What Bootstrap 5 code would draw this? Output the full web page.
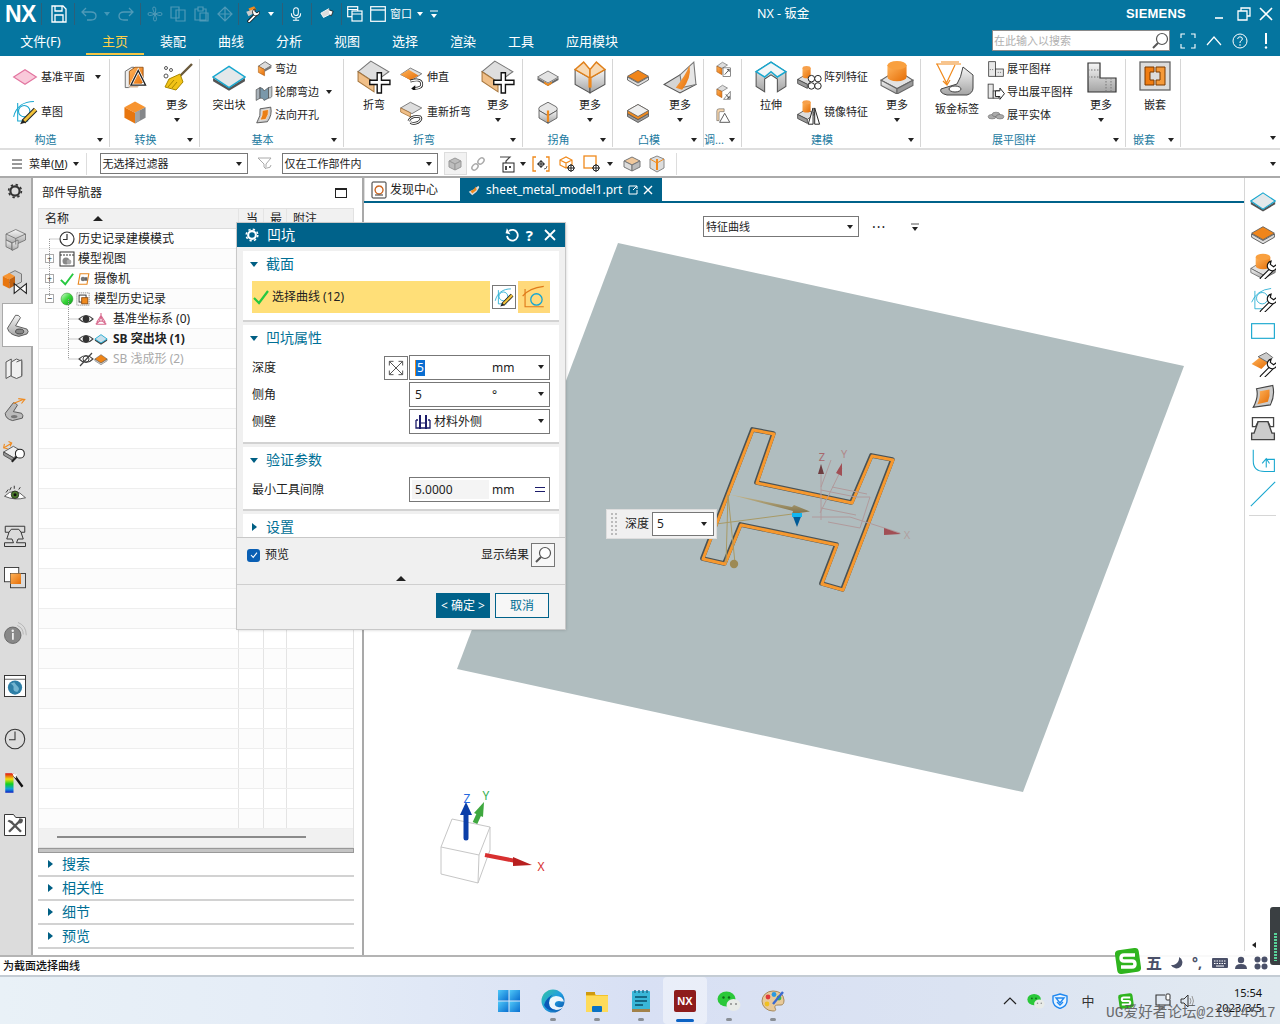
<!DOCTYPE html>
<html lang="zh-CN">
<head>
<meta charset="UTF-8">
<title>NX - 钣金</title>
<link rel="stylesheet" href="https://cdn.jsdelivr.net/npm/bootstrap@5.3.0/dist/css/bootstrap.min.css">
<style>
html, body { margin:0; width:1280px; height:1024px; overflow:hidden; background:#fff; }
body { font-family:"Noto Sans","Noto Sans CJK SC",sans-serif; font-size:11px; line-height:16px; color:#222; }
svg { display:block; flex:none; }
.nx-app { width:1280px; height:1024px; position:relative; }
.ml1{margin-left:1px}.ml2{margin-left:2px}.ml3{margin-left:3px}.ml4{margin-left:4px}.ml5{margin-left:5px}.ml6{margin-left:6px}.ml7{margin-left:7px}.ml8{margin-left:8px}.ml9{margin-left:9px}.ml10{margin-left:10px}.ml12{margin-left:12px}.ml13{margin-left:13px}.ml22{margin-left:22px}.ml20{margin-left:20px}
.mr6{margin-right:6px}.mr7{margin-right:7px}
.i10{width:10px;height:10px}.i14{width:14px;height:14px}.i16{width:16px;height:16px}.i18{width:18px;height:18px}.i20{width:20px;height:20px}.i24{width:24px;height:24px}.i26{width:26px;height:26px}.i28{width:28px;height:28px}.i32{width:32px;height:32px}.i34{width:34px;height:34px}.i44{width:44px;height:38px}
.tri-d { width:0;height:0;border-left:3.5px solid transparent;border-right:3.5px solid transparent;border-top:4px solid #222;flex:none; }
.tri-w { border-top-color:#fff; }
.tri-r { width:0;height:0;border-top:4px solid transparent;border-bottom:4px solid transparent;border-left:5px solid #005f84;flex:none; }
.tri-t { width:0;height:0;border-left:5px solid transparent;border-right:5px solid transparent;border-bottom:5px solid #222;flex:none; }

/* title area */
.nx-top { height:56px; background:#05759f; color:#fff; flex:none; }
.top-row { height:28px; }
.nx-logo { font:bold 23px/28px "Liberation Sans",sans-serif; width:31px; margin-left:5px; letter-spacing:-.5px; }
.q-sep { width:1px; height:22px; background:#2d5f78; flex:none; }
.q-title { position:relative; font-size:12.5px; width:60px; white-space:nowrap; }
.q-left { width:757px; }
.q-brand { font:bold 13px/28px "Liberation Sans",sans-serif; letter-spacing:.2px; margin-left:309px; width:66px; white-space:nowrap; }
.m-tab { height:26px; width:58px; text-align:center; font-size:13px; line-height:24px; flex:none; }
.m-file { width:81px; margin-right:5px; }
.m-wide { width:84px; }
.m-active { color:#ffd04a; border-bottom:2px solid #f6c544; }
.nx-search { width:178px; height:21px; background:#fff; border:1px solid #8a8a8a; margin-left:358px; color:#b0b0b0; padding-left:1px; line-height:19px; align-self:flex-start; margin-top:2px; }
.top-ic { margin-top:-2px; }

/* ribbon */
.nx-ribbon { height:94px; background:#fff; border-bottom:2px solid #dedede; flex:none; position:relative; }
.rg { height:88px; margin-top:3px; border-right:1px solid #d6d6d6; flex:none; }
.rg-body { height:74px; }
.rg-foot { height:14px; color:#1b7aa0; line-height:14px; font-size:11px; }
.rg-name { flex-grow:1; text-align:center; white-space:nowrap; }
.rg-car { width:18px; display:flex; justify-content:center; align-items:center; }
.w110{width:110px}.w90{width:90px}.w144{width:144px}.w179{width:179px}.w91{width:91px}.w38{width:38px}.w205{width:205px}.w55{width:55px}
.stk2 > div { height:35px; display:flex; align-items:center; white-space:nowrap; }
.stk3 { margin-top:-2px; }
.stk3 > div { height:23px; display:flex; align-items:center; white-space:nowrap; }
.lg { display:flex; flex-direction:column; align-items:center; text-align:center; white-space:nowrap; }
.lg svg { margin-top:1px; }
.lg .i32 { height:34px; }
.lg-lab { margin-top:3px; }
.lg .tri-d { margin-top:5px; }
.lg-44 { width:48px; }
.lg-34 { width:34px; }

/* toolbar */
.nx-bar { height:28px; border-bottom:2px solid #aaa; background:#fff; flex:none; padding-top:1px; }
.nx-sel { height:21px; background:#fff; border:1px solid #777; display:flex; align-items:center; justify-content:space-between; padding:0 5px 0 2px; flex:none; }
.w148{width:148px}.w156{width:156px}
.bar-sep { width:1px;height:22px;background:#ddd;flex:none; }
.bar-box { width:23px;height:23px;background:#f2f2f2;border:1px solid #ddd;display:flex;align-items:center;justify-content:center;flex:none; }

/* main */
.nx-main { height:777px; flex:none; position:relative; }
.nv-strip { width:33px; background:#dcdcdc; border-right:2px solid #a9a9a9; flex:none; }
.st-i { height:42px; display:flex; align-items:center; justify-content:center; flex:none; padding-right:2px; }
.st-top { height:26px; margin-bottom:15px; }
.st-on { height:44px; background:#fff; margin:0 -2px 0 2px; border:1px solid #aaa; border-right:none; position:relative; padding:0; }
.mt11x{margin-top:11px}.mt13x{margin-top:13px}.mt2x{margin-top:2px}

.nv-panel { width:331px; border-right:2px solid #a9a9a9; flex:none; background:#fff; position:relative; }
.nv-head { height:30px; padding:0 15px 0 9px; font-size:12px; }
.nv-win { width:12px;height:10px;border:1px solid #222;border-top-width:2px; }
.nv-table { width:316px; margin-left:5px; border:1px solid #e2e2e2; border-right-color:#e2e2e2; position:relative; height:640px; overflow:hidden; }
.nv-hd, .nv-row { display:flex; height:20px; }
.nv-hd { background:#f1f1f1; border-bottom:1px solid #ddd; line-height:20px; font-size:12px; }
.nv-row { border-bottom:1px solid #eee; }
.nv-row:nth-child(even) { background:#fcfcfc; }
.c-name { width:200px; border-right:1px solid #e4e4e4; display:flex; align-items:center; position:relative; flex:none; overflow:hidden; white-space:nowrap; }
.c-a { width:25px; border-right:1px solid #e4e4e4; flex:none; padding-left:7px; }
.c-b { width:23px; border-right:1px solid #e4e4e4; flex:none; padding-left:6px; }
.c-c { flex-grow:1; padding-left:6px; }
.nv-text { font-size:12px; color:#222; }
.nv-bold { font-weight:700; }
.nv-gray { color:#aaa; }
.pm-box { width:9px;height:9px;border:1px solid #aaa;background:#fff;position:absolute;left:6px;top:5px;color:#222;display:flex;align-items:center;justify-content:center;font-size:9px;line-height:7px; }
.tree-a { padding-left:20px; }
.tree-b { padding-left:21px; }
.tree-c { padding-left:39px; }
.nv-tree-svg { position:absolute; left:0; top:20px; pointer-events:none; }
.nv-hscroll { position:absolute; left:0; right:0; bottom:0; height:18px; background:#f1f1f1; }
.nv-thumb { position:absolute; left:18px; top:7px; width:249px; height:2px; background:#8a8a8a; }
.nv-grip { width:316px; height:5px; margin-left:5px; background:#c4c4c4; border:1px solid #999; }
.nv-fold { width:316px; margin-left:5px; height:24px; border-bottom:2px solid #d2d2d2; color:#006f95; font-size:14px; padding-left:10px; line-height:24px; }
.nv-fold span { margin-left:9px; }

.vp { flex-grow:1; position:relative; background:#fff; }
.vp-tabs { height:25px; width:880px; position:relative; z-index:2; border-bottom:2px solid #00628a; }
.vp-tab { height:23px; display:flex; align-items:center; font-size:12px; }
.vp-tab1 { width:96px; padding-left:5px; border-left:1px solid #ddd; }
.vp-tab2 { width:202px; background:#00628a; color:#fff; padding-left:7px; }
.vp-canvas { position:absolute; left:0; top:0; }
.vp-side { position:absolute; right:0; top:0; bottom:0; width:36px; border-left:1px solid #d6d6d6; background:#fff; padding-top:10px; }
.vp-side > svg { margin:0 0 6.5px 5px; }
.vp-rule { width:27px; height:1px; background:#d6d6d6; margin:2px 0 0 4px; }
.vp-combo { position:absolute; left:339px; top:38px; }
.vp-more { position:absolute; left:506px; top:38px; width:50px; height:21px; display:flex; align-items:center; font-size:14px; letter-spacing:1px; }
.vp-pop { position:absolute; left:242px; top:331px; width:111px; height:30px; background:#f0f0f0; border:1px solid #ddd; display:flex; align-items:center; }
.pop-grip { width:7px; height:24px; margin-left:3px; background-image:radial-gradient(#bbb 1.2px, transparent 1.4px); background-size:4px 4px; flex:none; }
.pop-sel { width:62px; height:24px; background:#fff; border:1px solid #777; display:flex; align-items:center; justify-content:space-between; padding:0 6px 0 4px; font-size:12px; margin-left:3px; }
.pop-lab { margin-left:8px; font-size:12px; }

/* dialog */
.dg { position:absolute; left:237px; top:45px; width:328px; height:406px; background:#f0f0f0; box-shadow:0 0 0 1px #c8c8c8, 1px 1px 3px rgba(0,0,0,.2); z-index:5; }
.dg-head { height:24px; background:#00628a; color:#fff; font-size:14px; padding:0 8px; }
.dg-q { font-size:15px; }
.dg-body { padding:4px 6px 0; }
.dg-sec { background:#fff; border-bottom:2px solid #d2d2d2; padding:0 9px; margin-bottom:3px; }
.dg-title { height:26px; color:#006f95; font-size:14px; display:flex; align-items:center; }
.dg-title .tri-dd { width:0;height:0;border-left:4.5px solid transparent;border-right:4.5px solid transparent;border-top:5px solid #005f84;margin:0 8px 0 -2px; }
.dg-title .tri-r { margin:0 9px 0 0; }
.dg-s1 { height:71px; }
.dg-s2 { height:119px; }
.dg-s3 { height:64px; }
.dg-s4 { height:23px; border-bottom:none; margin-bottom:0; }
.dg-pick { height:32px; width:238px; background:#ffdf78; display:flex; align-items:center; padding-left:1px; font-size:12px; margin-top:4px; }
.dg-icobtn { width:24px;height:24px;background:#fff;border:1px solid #777;display:flex;align-items:center;justify-content:center;flex:none; }
.dg-yel { width:32px;height:32px;background:#ffd97a;display:flex;align-items:center;justify-content:center;flex:none; }
.dg-row { height:25px; margin-bottom:2px; display:flex; align-items:center; font-size:12px; }
.dg-r1 { margin-top:4px; }
.dg-lab { width:132px; flex:none; }
.dg-field { width:141px; height:25px; border:1px solid #777; background:#fff; display:flex; align-items:center; position:relative; padding-left:5px; font-size:12px; flex:none; }
.dg-indent { margin-left:25px; }
.dg-unit { position:absolute; left:82px; font-size:12px; }
.dg-field .tri-d { position:absolute; right:5px; top:9px; }
.dg-mark { background:#0a6ed1; color:#fff; border-left:1px solid #f08a1d; padding:0 1px; line-height:16px; }
.dg-grey { position:absolute; left:2px; top:2px; bottom:2px; width:77px; background:#f4f4f4; padding-left:3px; line-height:19px; }
.dg-eq { position:absolute; right:4px; top:9px; width:10px; height:5px; border-top:1px solid #1c1c6a; border-bottom:1px solid #1c1c6a; }
.dg-foot { border-top:1px solid #c8c8c8; margin:0; height:91px; font-size:12px; padding:5px 10px 0 9px; position:relative; }
.dg-search { width:24px;height:24px;border:1px solid #777;background:#f7f7f7;display:flex;align-items:center;justify-content:center;margin-left:2px; }
.dg-check { width:13px;height:13px;margin:0 5px 0 1px;border-radius:3px;background:#0a5fb4;border:none;flex:none;display:flex;align-items:center;justify-content:center; }
.dg-up { position:absolute; left:159px; top:38px; }
.dg-line { position:absolute; left:0; right:0; top:46px; border-top:1px solid #cfcfcf; }
.btn.dg-ok, .btn.dg-no { position:absolute; top:55px; height:25px; font-size:12px; line-height:16px; border-radius:0; padding:0; }
.btn.dg-ok { left:199px; width:54px; background:#00628a; color:#fff; border:1px solid #00628a; }
.btn.dg-no { left:258px; width:54px; background:#f7f7f7; color:#006f95; border:1px solid #00628a; }

/* bottom */
.nx-status { height:22px; border-top:2px solid #b4b4b4; border-bottom:2px solid #c4ccd4; background:#fff; font-weight:500; padding-left:3px; line-height:18px; flex:none; color:#111; }
.nx-task { height:47px; background:linear-gradient(90deg,#e9f1f7 0%,#e4ecf7 25%,#d8e0f4 50%,#dbe3f2 75%,#e2eaf1 100%); position:relative; flex:none; }
.tb-i { width:44px; height:47px; display:flex; align-items:center; justify-content:center; position:relative; flex:none; }
.tb-first { margin-left:487px; }
.tb-on { background:rgba(255,255,255,.45); border-radius:4px; }
.tb-dot { position:absolute; bottom:3px; left:19px; width:6px; height:3px; border-radius:2px; background:#8a8f96; }
.tb-dash { position:absolute; bottom:2px; left:13px; width:18px; height:3px; border-radius:2px; background:#0b62c4; }
.tray { margin-left:208px; }
.tb-zh { font-size:13px; width:14px; text-align:center; color:#333; margin-left:13px; }
.tb-time { position:absolute; left:1202px; top:8px; width:60px; text-align:right; font-size:11px; line-height:15px; color:#111; }
.tb-mark { position:absolute; left:1106px; top:27px; font-family:"Liberation Mono","Noto Sans CJK SC",monospace; font-size:14.5px; line-height:18px; color:#555; opacity:.85; white-space:nowrap; letter-spacing:.1px; }
.ime { position:absolute; left:1120px; top:951px; width:157px; height:23px; background:rgba(255,255,255,.92); display:flex; align-items:center; color:#4a5068; z-index:6; padding-left:26px; }
.ime-logo { position:absolute; left:1113px; top:946px; z-index:7; }
.ime-ch { font-size:16px; font-weight:700; }
.ime-p { font-size:14px; font-weight:700; width:12px; }
.meter { position:absolute; left:1270px; top:907px; width:10px; height:58px; background:#3a3f42; border-radius:3px 0 0 3px; z-index:6; }
.meter-fill { position:absolute; left:4px; right:3px; top:26px; bottom:4px; background:repeating-linear-gradient(180deg,#58d39a 0 2px,transparent 2px 3px); }
.vp-back { position:absolute; left:1252px; top:942px; width:0;height:0;border-top:3.5px solid transparent;border-bottom:3.5px solid transparent;border-right:4px solid #222; z-index:6; }
</style>
</head>
<body>
<svg width="0" height="0" class="position-absolute">
<defs>
  <linearGradient id="g-or" x1="0" y1="0" x2="1" y2="1"><stop offset="0" stop-color="#ffb45c"/><stop offset="1" stop-color="#e56d05"/></linearGradient>
  <linearGradient id="g-gr" x1="0" y1="0" x2="0" y2="1"><stop offset="0" stop-color="#f6f6f6"/><stop offset="1" stop-color="#a4a4a4"/></linearGradient>
  <linearGradient id="g-win" x1="0" y1="0" x2="1" y2="1"><stop offset="0" stop-color="#4fc8f8"/><stop offset="1" stop-color="#0a6fd0"/></linearGradient>
  <linearGradient id="g-ball" x1="0" y1="0" x2="1" y2="1"><stop offset="0" stop-color="#d8ffd8"/><stop offset=".5" stop-color="#38d838"/><stop offset="1" stop-color="#0e9a20"/></linearGradient>
  <linearGradient id="g-arrow" x1="0" y1="0" x2="0" y2="1"><stop offset="0" stop-color="#c9bb8e"/><stop offset="1" stop-color="#7d6f48"/></linearGradient>
  <linearGradient id="g-rain" x1="0" y1="0" x2="0" y2="1"><stop offset="0" stop-color="#e01010"/><stop offset=".3" stop-color="#f0e010"/><stop offset=".55" stop-color="#10d020"/><stop offset=".8" stop-color="#10a0e0"/><stop offset="1" stop-color="#1020c0"/></linearGradient>
  <linearGradient id="g-edge" x1="0" y1="0" x2="1" y2="1"><stop offset="0" stop-color="#36c4a0"/><stop offset=".5" stop-color="#1f9fe0"/><stop offset="1" stop-color="#0b4ea8"/></linearGradient>
  <g id="wr"><path d="M12 30 L24 18" stroke="#111" stroke-width="6" stroke-linecap="round"/><path d="M12 30 L24 18" stroke="#fff" stroke-width="3.4" stroke-linecap="round"/><path d="M30 12 a6 6 0 1 1 -7 -4 l-1 4 4 3 z" fill="#fff" stroke="#111" stroke-width="1.4"/></g>
  <g id="pl"><path d="M19 12h4v7h8v4h-8v8h-4v-8h-7v-4h7z" fill="#fff" stroke="#111" stroke-width="1.3"/></g>
</defs>
<symbol id="i-plane" viewBox="0 0 32 32"><polygon points="2,16 16,7 30,16 16,25" fill="#f9c9da" stroke="#e2749f" stroke-width="1.4"/></symbol>
<symbol id="i-sketch" viewBox="0 0 32 32"><path d="M2 22C5 9 15 3 27 3" fill="none" stroke="#18a7cf" stroke-width="1.3"/><path d="M7 5V27H20" fill="none" stroke="#18a7cf" stroke-width="1.3"/><circle cx="15" cy="15" r="7" fill="none" stroke="#18a7cf" stroke-width="1.3"/><path d="M29 13L14 28" stroke="#222" stroke-width="6"/><path d="M29 13L14 28" stroke="#f2c23a" stroke-width="3.6"/><polygon points="13,25 17,29 10,31" fill="#222"/></symbol>
<symbol id="i-conv" viewBox="0 0 32 32"><path d="M4 9l8-5h3v20l-7 5H4z" fill="#eee" stroke="#555"/><path d="M9 9l7-5h10v18l-7 6H9z" fill="url(#g-or)" stroke="#8a4a10"/><path d="M20 8L29 26H11Z" fill="none" stroke="#fff" stroke-width="3.4"/><path d="M20 8L29 26H11Z" fill="none" stroke="#222" stroke-width="1.6"/></symbol>
<symbol id="i-cube" viewBox="0 0 32 32"><polygon points="16,3 29,10 16,17 3,10" fill="#f79430"/><polygon points="3,10 16,17 16,30 3,23" fill="#e8760f"/><polygon points="16,17 29,10 29,23 16,30" fill="#85878a"/><polygon points="16,17 22,14 22,26 16,30" fill="#a2a4a6"/></symbol>
<symbol id="i-broom" viewBox="0 0 32 32"><path d="M31 3L17 17" stroke="#6b5a3c" stroke-width="2.4"/><path d="M19 13L8 18 4 26l11 3 7-8z" fill="#f2c318" stroke="#a88700"/><path d="M7 26l6-7M11 27l5-6" stroke="#a88700"/><g fill="none" stroke="#555"><circle cx="5" cy="7" r="1.5"/><circle cx="10" cy="9" r="1.5"/><circle cx="5" cy="15" r="2"/></g></symbol>
<symbol id="i-plate" viewBox="0 0 32 32"><polygon points="1,17 16,26 31,17 31,20 16,29 1,20" fill="#555"/><polygon points="16,6 31,16 16,26 1,16" fill="#e4e8ea" stroke="#18a7cf" stroke-width="1.4"/></symbol>
<symbol id="i-flange" viewBox="0 0 32 32"><polygon points="6,11 18,3 29,10 17,17" fill="#dcdcdc" stroke="#555" stroke-width="1.4"/><polygon points="6,11 17,17 17,28 6,22" fill="url(#g-or)" stroke="#a85a10"/><polygon points="17,17 29,10 29,14 17,21" fill="#777"/></symbol>
<symbol id="i-contour" viewBox="0 0 32 32"><path d="M2 12L9 8V27L2 31Z" fill="#a9b2b9" stroke="#333"/><path d="M9 8q6 1 7 6L24 8V27L16 31q-1-5-7-4Z" fill="#7a98aa" stroke="#333"/><path d="M24 8q5 0 6-2V24q-2 3-6 3Z" fill="#c4cbcf" stroke="#333"/></symbol>
<symbol id="i-cutout" viewBox="0 0 32 32"><path d="M9 5L28 2Q31 16 22 28L3 30Q11 17 9 5Z" fill="#ccc" stroke="#333" stroke-width="1.3"/><path d="M13 8L24 6Q25 15 19 24L9 25Q14 16 13 8Z" fill="#ea7f16" stroke="#fff"/></symbol>
<symbol id="i-bend" viewBox="0 0 32 32"><polygon points="1,11 13,1 30,11 16,21" fill="#dedede" stroke="#777"/><polygon points="1,11 16,21 16,30 1,20" fill="#f0bf88" stroke="#a87840"/><use href="#pl"/></symbol>
<symbol id="i-unbend" viewBox="0 0 32 32"><polygon points="2,13 14,5 28,12 16,20" fill="#dedede" stroke="#666"/><polygon points="2,13 12,7 24,14 14,20" fill="url(#g-or)"/><path d="M14 21q14-4 14 4 0 5-9 5" fill="none" stroke="#111" stroke-width="3.4"/><path d="M14 21q14-4 14 4 0 5-9 5" fill="none" stroke="#fff" stroke-width="1.6"/><polygon points="20,26 15,30 20,34" fill="#111"/></symbol>
<symbol id="i-rebend" viewBox="0 0 32 32"><polygon points="2,11 14,4 28,11 16,18" fill="#dedede" stroke="#666"/><polygon points="2,11 14,17 14,22 2,16" fill="#f0bf88" stroke="#a87840"/><path d="M12 27q3-7 14-5 3 3-3 7-5 2-9 0" fill="none" stroke="#111" stroke-width="3.2"/><path d="M12 27q3-7 14-5 3 3-3 7-5 2-9 0" fill="none" stroke="#fff" stroke-width="1.4"/></symbol>
<symbol id="i-cor1" viewBox="0 0 32 32"><polygon points="2,17 16,25 30,17 30,20 16,28 2,20" fill="#666"/><polygon points="16,8 30,16 16,24 2,16" fill="#e3e3e3" stroke="#555"/><polygon points="11,22 16,25 21,22 21,25 16,28 11,25" fill="#f08a1d"/></symbol>
<symbol id="i-cor2" viewBox="0 0 32 32"><polygon points="2,9 16,17 16,31 2,23" fill="url(#g-gr)" stroke="#555"/><polygon points="16,17 30,9 30,23 16,31" fill="url(#g-gr)" stroke="#555"/><polygon points="2,9 10,2 16,9 16,17" fill="#f7d9b4" stroke="#e0801a" stroke-width="1.4"/><polygon points="30,9 22,2 16,9 16,17" fill="#f7d9b4" stroke="#e0801a" stroke-width="1.4"/><path d="M16 17V26" stroke="#f08a1d" stroke-width="3"/></symbol>
<symbol id="i-cor3" viewBox="0 0 32 32"><path d="M16 3l11 6q2 2 1 5L16 21 4 14q-1-3 1-5Z" fill="#e6e6e6" stroke="#444"/><path d="M4 14l12 7V31L4 24Z" fill="url(#g-gr)" stroke="#444"/><path d="M28 14l-12 7V31l12-7Z" fill="url(#g-gr)" stroke="#444"/><path d="M16 14V29" stroke="#f08a1d" stroke-width="3"/></symbol>
<symbol id="i-dim1" viewBox="0 0 32 32"><polygon points="2,16 16,24 30,16 30,20 16,28 2,20" fill="#ddd" stroke="#444"/><polygon points="16,7 30,15 16,23 2,15" fill="#f0851a" stroke="#555"/></symbol>
<symbol id="i-dim2" viewBox="0 0 32 32"><polygon points="2,18 16,26 30,18 30,22 16,30 2,22" fill="#999" stroke="#444"/><polygon points="16,6 30,14 30,18 16,26 2,18 2,14" fill="#f08a1d" stroke="#555"/><polygon points="16,6 30,14 16,22 2,14" fill="#efefef" stroke="#555"/></symbol>
<symbol id="i-guss" viewBox="0 0 32 32"><polygon points="1,23 16,14 31,23 16,31" fill="#d5d5d5" stroke="#555"/><polygon points="16,14 29,2 31,23 18,26" fill="#e6e6e6" stroke="#777"/><path d="M12 26Q21 15 25 5 27 17 18 28Z" fill="url(#g-or)"/></symbol>
<symbol id="i-adj1" viewBox="0 0 32 32"><polygon points="5,11 15,4 24,9 14,15" fill="#ddd" stroke="#555"/><polygon points="5,11 14,15 14,26 5,21" fill="url(#g-or)" stroke="#a85a10"/><rect x="16" y="14" width="13" height="15" fill="#fff" stroke="#333"/><path d="M19 26L27 17M23 17h4v4" fill="none" stroke="#222" stroke-width="1.3"/></symbol>
<symbol id="i-adj2" viewBox="0 0 32 32"><polygon points="5,11 15,4 24,9 14,15" fill="#ddd" stroke="#555"/><polygon points="5,11 14,15 14,26 5,21" fill="url(#g-or)" stroke="#a85a10"/><path d="M17 29L29 15V29Z" fill="#fff" stroke="#333"/><path d="M21 20l6 7M27 23v4h-4" fill="none" stroke="#222" stroke-width="1.3"/></symbol>
<symbol id="i-adj3" viewBox="0 0 32 32"><path d="M5 26V9q0-4 4-4h9v5h-7q-2 0-2 2v14Z" fill="#f7d6ad" stroke="#555"/><path d="M19 13L28 29H10Z" fill="#fff" stroke="#333" stroke-width="1.4"/></symbol>
<symbol id="i-ext" viewBox="0 0 32 32"><path d="M2 11L16 2 30 11V25L22 30V18L16 14 10 18V30L2 25Z" fill="url(#g-gr)" stroke="#555"/><path d="M2 11L16 2 30 11 22 16 16 11 10 16Z" fill="#f4f6f7" stroke="#18a7cf" stroke-width="1.4"/></symbol>
<symbol id="i-pat" viewBox="0 0 32 32"><polygon points="2,19 12,13 24,18 14,25" fill="#ddd" stroke="#444"/><polygon points="2,19 14,25 14,30 2,24" fill="#999" stroke="#444"/><path d="M8 5V15a5 2.5 0 0 0 10 0V5Z" fill="url(#g-or)"/><ellipse cx="13" cy="5" rx="5" ry="2.5" fill="#f7a04a"/><g fill="#fff" stroke="#222" stroke-width="1.2"><circle cx="19" cy="18" r="4"/><circle cx="27" cy="18" r="4"/><circle cx="19" cy="27" r="4"/><circle cx="27" cy="27" r="4"/></g></symbol>
<symbol id="i-mir" viewBox="0 0 32 32"><polygon points="2,19 12,13 24,18 14,25" fill="#ddd" stroke="#444"/><polygon points="2,19 14,25 14,30 2,24" fill="#999" stroke="#444"/><path d="M8 4V14a5 2.5 0 0 0 10 0V4Z" fill="url(#g-or)"/><ellipse cx="13" cy="4" rx="5" ry="2.5" fill="#f7a04a"/><path d="M21 11L15 31H21ZM23 11L29 31H23Z" fill="#fff" stroke="#222" stroke-width="1.2"/></symbol>
<symbol id="i-cyl" viewBox="0 0 32 32"><polygon points="1,19 9,14 23,14 31,19 16,27" fill="#e2e2e2" stroke="#666"/><polygon points="1,19 16,27 16,32 1,24" fill="url(#g-gr)" stroke="#666"/><polygon points="31,19 16,27 16,32 31,24" fill="#999" stroke="#666"/><path d="M7 5V16a9 4 0 0 0 18 0V5Z" fill="url(#g-or)"/><ellipse cx="16" cy="5" rx="9" ry="4" fill="#f9a03f"/></symbol>
<symbol id="i-tag" viewBox="0 0 44 38"><path d="M6 29Q4 33 12 35H32Q38 33 38 28V15L28 7Q26 18 22 24Z" fill="url(#g-gr)" stroke="#444"/><ellipse cx="20" cy="29" rx="6" ry="3" fill="#fff" stroke="#444"/><path d="M1 4H26M6 2H24" stroke="#f08a1d" stroke-width="1.2"/><path d="M2 4L12 24M20 5L11 24M8 21l4 4 3-5" fill="none" stroke="#f08a1d" stroke-width="1.2"/></symbol>
<symbol id="i-flat" viewBox="0 0 32 32"><rect x="3" y="3" width="12" height="26" fill="#e8e8e8" stroke="#333" stroke-width="1.4"/><rect x="15" y="16" width="14" height="13" fill="#e8e8e8" stroke="#333" stroke-width="1.4"/><path d="M5 17H13M19 22H25" stroke="#333" stroke-dasharray="2 2"/></symbol>
<symbol id="i-exp" viewBox="0 0 32 32"><rect x="2" y="2" width="9" height="25" fill="#e8e8e8" stroke="#333" stroke-width="1.4"/><rect x="11" y="14" width="10" height="13" fill="#e8e8e8" stroke="#333" stroke-width="1.4"/><path d="M15 14H23V9L31 19 23 29V24H15Z" fill="#fff" stroke="#111" stroke-width="1.6"/></symbol>
<symbol id="i-sol" viewBox="0 0 32 32"><g fill="#aaa" stroke="#666"><ellipse cx="9" cy="19" rx="7" ry="4"/><ellipse cx="16" cy="15" rx="7" ry="4"/><ellipse cx="23" cy="19" rx="7" ry="4"/></g></symbol>
<symbol id="i-flatl" viewBox="0 0 32 32"><path d="M3 2H15V17H31V31H3Z" fill="url(#g-gr)" stroke="#333" stroke-width="1.2"/><path d="M3 9H15M3 16H15M21 17V31M26 17V31" stroke="#777" stroke-dasharray="1.5 1.5"/></symbol>
<symbol id="i-nest" viewBox="0 0 32 32"><rect x="1" y="1" width="30" height="28" fill="#dcdcdc" stroke="#666" stroke-width="1.3"/><path d="M6 6H15V11H11V19H15V24H6Z" fill="#f07d12" stroke="#7a3a00"/><path d="M17 6H26V24H17V19H21V11H17Z" fill="#f59a3a" stroke="#7a3a00"/></symbol>

<symbol id="i-funnel" viewBox="0 0 16 16"><path d="M1 2H14L9 8V13L7 11V8Z" fill="none" stroke="#aaa"/><path d="M10 12q4 0 4-3" fill="none" stroke="#aaa"/></symbol>
<symbol id="i-cubes-d" viewBox="0 0 16 16"><g fill="#bdbdbd" stroke="#999"><polygon points="8,2 14,5 8,8 2,5"/><polygon points="2,5 8,8 8,14 2,11"/><polygon points="14,5 8,8 8,14 14,11"/></g></symbol>
<symbol id="i-chain" viewBox="0 0 16 16"><g fill="none" stroke="#aaa" stroke-width="1.5"><ellipse cx="5" cy="11" rx="3.5" ry="2.5" transform="rotate(-45 5 11)"/><ellipse cx="11" cy="5" rx="3.5" ry="2.5" transform="rotate(-45 11 5)"/></g></symbol>
<symbol id="i-fsel" viewBox="0 0 18 18"><path d="M2 2H12L8 6V9" fill="none" stroke="#444" stroke-width="1.2"/><rect x="5" y="8" width="11" height="9" fill="#fff" stroke="#222"/><path d="M7 11h2v4H7zM11 11h2v2h-2z" fill="#444"/></symbol>
<symbol id="i-s1" viewBox="0 0 18 18"><path d="M4 2H1V16H4M14 2H17V16H14" fill="none" stroke="#f08a1d" stroke-width="1.3"/><path d="M9 5V13M5 9H13" stroke="#222"/><circle cx="9" cy="9" r="2.5" fill="none" stroke="#222"/><path d="M12 14q3 0 3-3" fill="none" stroke="#666"/></symbol>
<symbol id="i-s2" viewBox="0 0 18 18"><path d="M2 5L8 2 14 5V10L8 13 2 10ZM2 5L8 8 14 5M8 8V13" fill="#fff" stroke="#f08a1d" stroke-width="1.2"/><circle cx="13" cy="13" r="3" fill="#fff" stroke="#222"/><path d="M13 9V17M9 13H17" stroke="#222"/></symbol>
<symbol id="i-s3" viewBox="0 0 18 18"><rect x="1" y="1" width="12" height="12" fill="none" stroke="#f08a1d" stroke-width="1.3"/><circle cx="13" cy="13" r="3" fill="#fff" stroke="#222"/><path d="M13 9V17M9 13H17" stroke="#222"/></symbol>
<symbol id="i-s4" viewBox="0 0 18 18"><polygon points="9,2 17,6 9,10 1,6" fill="#f0c89c" stroke="#777"/><polygon points="1,6 9,10 9,16 1,12" fill="#ddd" stroke="#777"/><polygon points="17,6 9,10 9,16 17,12" fill="#bbb" stroke="#777"/></symbol>
<symbol id="i-s5" viewBox="0 0 18 18"><polygon points="9,1 16,4 16,13 9,17 2,13 2,4" fill="#ddd" stroke="#888"/><path d="M9 4V15" stroke="#f08a1d" stroke-width="2"/><path d="M2 4L9 8 16 4" fill="none" stroke="#f08a1d"/></symbol>

<symbol id="i-gear" viewBox="0 0 16 16"><circle cx="8" cy="8" r="4.6" fill="none" stroke="#333" stroke-width="2.2"/><circle cx="8" cy="8" r="6.4" fill="none" stroke="#333" stroke-width="1.6" stroke-dasharray="2.4 2.6"/></symbol>
<symbol id="i-parts" viewBox="0 0 32 32"><g fill="url(#g-gr)" stroke="#666"><polygon points="17,2 30,8 30,16 17,22 4,16 4,8" /><polygon points="4,16 12,20 12,29 4,25"/><polygon points="12,20 20,16 20,26 12,30"/></g><path d="M4 8L17 14 30 8M17 14V22" fill="none" stroke="#666"/></symbol>
<symbol id="i-cons" viewBox="0 0 32 32"><polygon points="8,6 16,2 24,6 24,16 16,20 8,16" fill="#ccc" stroke="#666"/><polygon points="1,9 9,5 16,9 9,13" fill="#f79430"/><polygon points="1,9 9,13 9,24 1,20" fill="#e8760f"/><polygon points="9,13 16,9 16,20 9,24" fill="#c06010"/><path d="M15 18L30 30V18L15 30Z" fill="#fff" stroke="#222" stroke-width="1.4"/></symbol>
<symbol id="i-smt" viewBox="0 0 32 32"><path d="M3 20L13 4q4-1 6 3L13 17 27 21q3 3 0 6L17 30Q5 28 3 20Z" fill="url(#g-gr)" stroke="#444"/><ellipse cx="18" cy="24" rx="5" ry="3" fill="#888" stroke="#333"/></symbol>
<symbol id="i-book" viewBox="0 0 32 32"><g fill="#efefef" stroke="#555" stroke-width="1.3"><path d="M4 8L11 4V26L4 30Z"/><path d="M11 8L18 4 25 7V27L18 30 11 27Z"/><path d="M18 8L25 5V26"/></g></symbol>
<symbol id="i-dimt" viewBox="0 0 32 32"><path d="M4 20L14 7q3 0 5 3L14 18 24 20q3 3 1 6L13 29Q4 27 4 20Z" fill="#bbb" stroke="#444"/><ellipse cx="15" cy="24" rx="4" ry="2" fill="#777"/><path d="M14 8L26 3M20 2l8 1-4 5" fill="none" stroke="#f08a1d" stroke-width="1.4"/></symbol>
<symbol id="i-meas" viewBox="0 0 32 32"><polygon points="2,16 14,9 26,16 14,23" fill="#eee" stroke="#444"/><polygon points="2,16 14,23 14,27 2,20" fill="#999" stroke="#444"/><path d="M2 11L12 5M3 6l-1 5 5 1M8 3l4 2-2 4" fill="none" stroke="#f08a1d" stroke-width="1.3"/><circle cx="22" cy="18" r="5.5" fill="#fff" stroke="#222" stroke-width="1.3"/><path d="M18 22L12 28" stroke="#222" stroke-width="2.6"/></symbol>
<symbol id="i-eyeg" viewBox="0 0 32 32"><path d="M2 19Q15 5 30 21 16 25 2 19Z" fill="#fff" stroke="#333"/><circle cx="16" cy="17" r="5" fill="#4a7a2a" stroke="#222"/><circle cx="16" cy="17" r="2" fill="#111"/><path d="M4 14l3-4M9 11l2-4M15 9V5M21 10l2-3" stroke="#222" stroke-width="1.2"/></symbol>
<symbol id="i-prof" viewBox="0 0 32 32"><path d="M3 3H29V11H24L21 7H11L8 11H3Z M8 11L5 20H12L14 25 2 25V30H30V25L18 25 20 20H27L24 11" fill="none" stroke="#333" stroke-width="1.3"/></symbol>
<symbol id="i-prof2" viewBox="0 0 32 32"><rect x="3" y="2" width="26" height="28" fill="#fff" stroke="none"/><path d="M3 2H29V13H25L22 7H10L7 13H3Z" fill="#fff" stroke="#444" stroke-width="1.6"/><path d="M10 7L5 21H2V29H30V21H27L22 7Z" fill="#ccc" stroke="#444" stroke-width="1.6"/></symbol>
<symbol id="i-layer" viewBox="0 0 32 32"><rect x="2" y="2" width="19" height="19" fill="#fff" stroke="#333" stroke-width="1.2"/><rect x="10" y="10" width="20" height="19" fill="none" stroke="#333" stroke-width="1.2"/><rect x="10" y="10" width="14" height="14" fill="url(#g-or)"/></symbol>
<symbol id="i-info" viewBox="0 0 32 32"><circle cx="13" cy="19" r="11" fill="#888" stroke="#555"/><rect x="12" y="16" width="2.4" height="9" fill="#eee"/><circle cx="13" cy="13" r="1.6" fill="#eee"/><g fill="none" stroke="#aaa"><path d="M19 6q8 3 8 12"/><path d="M20 2q11 4 11 17"/></g></symbol>
<symbol id="i-web" viewBox="0 0 32 32"><rect x="2" y="2" width="28" height="28" fill="#fff" stroke="#333" stroke-width="1.3"/><path d="M2 7H30" stroke="#333"/><circle cx="16" cy="18" r="9.5" fill="#2d7ea6"/><path d="M10 13q5 2 4 6t5 5q4-4 1-7t-5-6" fill="#72b4d0"/></symbol>
<symbol id="i-clock" viewBox="0 0 32 32"><circle cx="16" cy="16" r="13" fill="none" stroke="#333" stroke-width="1.4"/><path d="M16 6V17H8" fill="none" stroke="#333" stroke-width="1.4"/></symbol>
<symbol id="i-color" viewBox="0 0 32 32"><rect x="3" y="3" width="11" height="26" fill="url(#g-rain)"/><path d="M15 6L26 21" stroke="#111" stroke-width="3.2"/><path d="M12 2l4 3 3-1-2 3 1 3-3-2" fill="#fff"/></symbol>
<symbol id="i-tools" viewBox="0 0 32 32"><path d="M2 2H14L17 6H30V30H2Z" fill="#fff" stroke="#333" stroke-width="1.3"/><path d="M8 25L23 10M24 25L11 12" stroke="#555" stroke-width="3.2"/><path d="M8 9l5 2-2 3-5-3zM26 8a4 4 0 0 1-4 6l-2-2 2-5z" fill="#555"/></symbol>

<symbol id="i-clk" viewBox="0 0 16 16"><circle cx="8" cy="8" r="7" fill="#fff" stroke="#333" stroke-width="1.2"/><path d="M8 3V8.5H4" fill="none" stroke="#333" stroke-width="1.2"/></symbol>
<symbol id="i-view" viewBox="0 0 16 16"><rect x="1" y="1" width="14" height="14" fill="#fff" stroke="#333"/><path d="M1 4H15" stroke="#333" stroke-dasharray="2 1"/><circle cx="7" cy="10" r="3.5" fill="#888"/><circle cx="10" cy="11" r="2.4" fill="#aaa"/></symbol>
<symbol id="i-chk" viewBox="0 0 16 16"><path d="M1 9L6 14 15 2" fill="none" stroke="#26c840" stroke-width="2.2"/></symbol>
<symbol id="i-cam" viewBox="0 0 16 16"><rect x="3" y="2" width="10" height="12" fill="none" stroke="#e88820" stroke-width="1.3" transform="skewX(-10) translate(2)"/><circle cx="8" cy="8" r="2.6" fill="#777"/><rect x="10" y="6" width="3" height="4" fill="#666"/></symbol>
<symbol id="i-ball" viewBox="0 0 16 16"><circle cx="8" cy="8" r="6.8" fill="url(#g-ball)" stroke="#2a8a2a" stroke-width=".6"/></symbol>
<symbol id="i-hist" viewBox="0 0 16 16"><rect x="1" y="1" width="14" height="14" fill="#fff" stroke="#888" stroke-dasharray="1.5 .8"/><rect x="3.5" y="3.5" width="8" height="8" fill="#fff" stroke="#222"/><rect x="6.5" y="6.5" width="7" height="7" fill="#f08a1d" stroke="#8a4a10"/></symbol>
<symbol id="i-eye" viewBox="0 0 16 16"><path d="M1 8Q8 1 15 8 8 15 1 8Z" fill="#fff" stroke="#444" stroke-width="1.1"/><circle cx="8" cy="8" r="3.4" fill="#333"/></symbol>
<symbol id="i-noeye" viewBox="0 0 16 16"><path d="M1 8Q8 1 15 8 8 15 1 8Z" fill="#fff" stroke="#444" stroke-width="1.1"/><circle cx="8" cy="8" r="3" fill="none" stroke="#444"/><path d="M2 15L14 2" stroke="#444" stroke-width="1.2"/></symbol>
<symbol id="i-csys" viewBox="0 0 16 16"><g fill="none" stroke="#d86a8e" stroke-width="1.3"><path d="M8 1V9L2 14M8 9L14 14M2 14H14M8 4L3 12M8 4L13 12"/><circle cx="8" cy="9" r="1.6" fill="#fff"/></g></symbol>
<symbol id="i-sblk" viewBox="0 0 16 16"><polygon points="1,8 8,12.5 15,8 15,10 8,14.5 1,10" fill="#444"/><polygon points="8,3 15,8 8,12.5 1,8" fill="#c9dfea" stroke="#18a7cf"/></symbol>
<symbol id="i-sdim" viewBox="0 0 16 16"><polygon points="1,8 8,12.5 15,8 15,10 8,14.5 1,10" fill="#ddd" stroke="#555" stroke-width=".6"/><polygon points="8,3 15,8 8,12.5 1,8" fill="#ef8518" stroke="#555" stroke-width=".6"/></symbol>
<symbol id="i-rect" viewBox="0 0 32 32"><rect x="2" y="7" width="28" height="18" fill="none" stroke="#18a7cf" stroke-width="1.4"/></symbol>
<symbol id="i-arc" viewBox="0 0 32 32"><path d="M4 2V16Q4 29 18 29H30V14H20" fill="none" stroke="#18a7cf" stroke-width="1.3"/><path d="M15 19L20 13 24 19M20 14V24" fill="none" stroke="#18a7cf" stroke-width="1.3"/></symbol>
<symbol id="i-diag" viewBox="0 0 32 32"><path d="M1 31L31 1" stroke="#18a7cf" stroke-width="1.4"/></symbol>
<symbol id="i-curv" viewBox="0 0 32 32"><path d="M8 7L28 3Q31 16 25 27L4 30Q11 17 8 7Z" fill="#ccc" stroke="#444" stroke-width="1.4"/><path d="M12 10L24 8Q25 16 22 23L9 26Q13 18 12 10Z" fill="url(#g-or)"/></symbol>
<symbol id="i-pick" viewBox="0 0 32 32"><path d="M2 15Q10 5 28 3" fill="none" stroke="#e07a1a" stroke-width="1.4"/><path d="M5 6V28H28" fill="none" stroke="#e07a1a" stroke-width="1.4"/><circle cx="19" cy="19" r="7" fill="none" stroke="#12a5d4" stroke-width="1.6"/></symbol>
<symbol id="i-xsq" viewBox="0 0 24 24"><path d="M4 4L20 20M4 20L20 4" stroke="#555" stroke-width="1.2"/><path d="M4 9V4H9M15 20H20V15M4 15V20H9M15 4H20V9" fill="none" stroke="#555" stroke-width="1.2"/></symbol>
<symbol id="i-side" viewBox="0 0 16 16"><path d="M1 6V14H15V6M1 6H3M13 6H15" fill="none" stroke="#1c1c6a" stroke-width="1.3"/><path d="M5 1V15M11 1V15" stroke="#1c1c6a" stroke-width="2"/><path d="M5 9H11" stroke="#1c1c6a"/></symbol>
<symbol id="i-mag" viewBox="0 0 18 18"><circle cx="11" cy="7" r="5.5" fill="#fff" stroke="#555" stroke-width="1.2"/><path d="M7 11L2 16" stroke="#555" stroke-width="2"/></symbol>
<symbol id="i-doc" viewBox="0 0 18 18"><rect x="2" y="1" width="14" height="16" rx="1" fill="#fff" stroke="#333"/><path d="M9 5a4 4 0 1 0 .1 0" fill="none" stroke="#c62" stroke-width="1.4"/><path d="M5 14H13" stroke="#333"/></symbol>
<symbol id="i-tabm" viewBox="0 0 16 16"><polygon points="2,10 8,7 13,3 14,5 11,10 6,14" fill="#ddd"/><polygon points="4,9 8,7 10,4 11,8 6,12" fill="#f08a1d"/></symbol>

<symbol id="i-win" viewBox="0 0 24 24"><g fill="url(#g-win)"><rect x="1" y="1" width="10.5" height="10.5"/><rect x="12.5" y="1" width="10.5" height="10.5"/><rect x="1" y="12.5" width="10.5" height="10.5"/><rect x="12.5" y="12.5" width="10.5" height="10.5"/></g></symbol>
<symbol id="i-edge" viewBox="0 0 24 24"><circle cx="12" cy="12" r="11.5" fill="url(#g-edge)"/><path d="M23 13Q22 7 15 7 8 8 8 14q0 6 7 7 5 0 8-4-3 2-6 1-4-1-3-4 1-2 4-2 5 1 5 0" fill="#fff" opacity=".92"/><path d="M8 14q0 6 7 7-9 2-12-5 2-8 11-11Q8 7 8 14Z" fill="#0b58b8"/></symbol>
<symbol id="i-fold" viewBox="0 0 24 24"><path d="M1 3H9L11 6H23V23H1Z" fill="#f3c22c"/><rect x="1" y="3" width="9" height="3" fill="#cf9a10"/><rect x="1" y="7" width="22" height="16" fill="#fedb5a"/><rect x="7" y="17" width="10" height="6" rx="1" fill="#0a72c4"/></symbol>
<symbol id="i-note" viewBox="0 0 24 24"><rect x="3" y="2" width="18" height="20" rx="1" fill="#39b7d8"/><path d="M6 1V4M10 1V4M14 1V4M18 1V4" stroke="#1a6a8a" stroke-width="1.4"/><path d="M6 8H18M6 12H18M6 16H14" stroke="#0a4f6a" stroke-width="1.5"/><rect x="3" y="20" width="18" height="3" fill="#a2824a"/></symbol>
<symbol id="i-wx" viewBox="0 0 24 24"><ellipse cx="9.5" cy="10" rx="9" ry="7.5" fill="#2ac83a"/><ellipse cx="16.5" cy="16" rx="7" ry="6" fill="#e8ebe8"/><circle cx="6.5" cy="8.5" r="1.2" fill="#0e6a1a"/><circle cx="12" cy="8.5" r="1.2" fill="#0e6a1a"/><circle cx="14" cy="15" r="1" fill="#8a8a8a"/><circle cx="19" cy="15" r="1" fill="#8a8a8a"/></symbol>
<symbol id="i-pal" viewBox="0 0 24 24"><path d="M12 2a11 10 0 1 0 0 20q4 0 2-3-1-3 3-3h3q3 0 3-5Q22 2 12 2Z" fill="#e8c99a" stroke="#a88a5a"/><circle cx="7" cy="8" r="2.4" fill="#e03a3a"/><circle cx="13" cy="5.5" r="2.4" fill="#2a9ae0"/><circle cx="18" cy="9" r="2.4" fill="#38c048"/><circle cx="6" cy="15" r="2.4" fill="#f0c020"/><path d="M22 3L12 15" stroke="#3a6ad0" stroke-width="2.4"/></symbol>
<symbol id="i-shld" viewBox="0 0 16 16"><path d="M8 1L15 3V8Q15 13 8 15.5 1 13 1 8V3Z" fill="#e8f4ff" stroke="#2088f0" stroke-width="1.4"/><path d="M4 5H12L8 10Z" fill="none" stroke="#2088f0" stroke-width="1.4"/><path d="M5 9L8 12 11 9" fill="none" stroke="#2088f0" stroke-width="1.4"/></symbol>
<symbol id="i-sgo" viewBox="0 0 30 30"><rect x="3" y="3" width="24" height="24" rx="4" transform="rotate(-8 15 15)" fill="#2fb41e"/><path d="M22 9H11q-3 0-3 3t3 3h8q3 0 3 3t-3 3H8" fill="none" stroke="#fff" stroke-width="3.4"/></symbol>
<symbol id="i-disp" viewBox="0 0 16 16"><path d="M10 2H1V12H15V7" fill="none" stroke="#333" stroke-width="1.1"/><path d="M4 15H10" stroke="#333"/><rect x="11" y="1" width="4" height="6" rx="1" fill="#fff" stroke="#333"/></symbol>
<symbol id="i-spk" viewBox="0 0 16 16"><path d="M1 6H4L8 2V14L4 10H1Z" fill="none" stroke="#333"/><path d="M10 5Q12 8 10 11M12 3Q15 8 12 13" fill="none" stroke="#999"/></symbol>
</svg>

<div class="nx-app d-flex flex-column">

  <header class="nx-top">
    <div class="top-row d-flex align-items-center">
      <div class="q-left d-flex align-items-center">
        <div class="nx-logo">NX</div>
        <div class="q-sep ml5"></div>
        <svg class="i18 ml8" viewBox="0 0 18 18"><path d="M2 1H13L16 4V17H2Z M5 1V6H12V1M5 17V10H13V17" fill="none" stroke="#fff" stroke-width="1.3"/></svg>
        <div class="q-sep ml6"></div>
        <svg class="i16 ml6" viewBox="0 0 16 16"><path d="M5 2L1 6 5 10M1 6H10Q15 6 15 10T10 14H6" fill="none" stroke="#4f9ab8" stroke-width="1.3"/></svg>
        <div class="tri-d tri-w ml7 opacity-25"></div>
        <svg class="i16 ml8" viewBox="0 0 16 16"><path d="M11 2L15 6 11 10M15 6H6Q1 6 1 10T6 14H10" fill="none" stroke="#4f9ab8" stroke-width="1.3"/></svg>
        <div class="q-sep ml6"></div>
        <svg class="i16 ml6" viewBox="0 0 16 16"><path d="M8 8Q4 1 7 1T8 8Q15 5 15 8T8 8Q11 15 8 15T8 8Q1 11 1 8T8 8Z" fill="none" stroke="#4f9ab8"/></svg>
        <svg class="i16 ml7" viewBox="0 0 16 16"><path d="M1 1H9V12H1ZM6 4H15V15H6Z" fill="none" stroke="#4f9ab8" stroke-width="1.2"/></svg>
        <svg class="i16 ml7" viewBox="0 0 16 16"><path d="M5 3H2V14H13V3H10M5 1H10V5H5ZM7 7H15V15H7Z" fill="none" stroke="#4f9ab8" stroke-width="1.2"/></svg>
        <svg class="i16 ml8" viewBox="0 0 16 16"><path d="M1 8L8 1 15 8 8 15ZM8 1V15M1 8H15" fill="none" stroke="#4f9ab8" stroke-width="1.2"/></svg>
        <div class="q-sep ml5"></div>
        <svg class="i18 ml5" viewBox="0 0 32 32"><path d="M8 6L18 2 22 8 12 14Z" fill="#f08a1d"/><path d="M4 12L16 8 18 14 8 20Z" fill="#ccc"/><g transform="translate(-3 -1)"><use href="#wr"/></g></svg>
        <div class="tri-d tri-w ml6"></div>
        <div class="q-sep ml8"></div>
        <svg class="i14 ml6" viewBox="0 0 14 18"><rect x="4" y="1" width="6" height="10" rx="3" fill="none" stroke="#fff" stroke-width="1.3"/><path d="M1 8Q1 14 7 14T13 8M7 14V17M3 17H11" fill="none" stroke="#fff" stroke-width="1.3"/></svg>
        <div class="q-sep ml8"></div>
        <svg class="i14 ml8" viewBox="0 0 16 16"><path d="M1 7L10 2 12 8 4 12Z" fill="#ddd" stroke="#fff"/><path d="M10 3L15 5 13 10 11 9" fill="#fff" stroke="#222"/></svg>
        <div class="q-sep ml7"></div>
        <svg class="i16 ml5" viewBox="0 0 16 16"><rect x=".7" y=".7" width="10" height="10" fill="#05759f" stroke="#fff" stroke-width="1.2"/><rect x="5" y="5" width="10" height="10" fill="#05759f" stroke="#fff" stroke-width="1.2"/><path d="M5 8H15M1 3.5H11" stroke="#fff"/></svg>
        <svg class="i16 ml7" viewBox="0 0 16 16"><rect x=".7" y=".7" width="14.6" height="14.6" fill="none" stroke="#fff" stroke-width="1.2"/><path d="M1 4H15" stroke="#fff" stroke-width="1.3"/></svg>
        <span class="ml4">窗口</span>
        <div class="tri-d tri-w ml5"></div>
        <svg class="i10 ml6" viewBox="0 0 10 10"><path d="M1 2H9" stroke="#fff"/><path d="M2 5H8L5 9Z" fill="#fff"/></svg>
      </div>
      <div class="q-title">NX - 钣金</div>
      <div class="q-brand">SIEMENS</div>
      <svg class="i10 ml22" viewBox="0 0 10 10"><path d="M1 9H9" stroke="#fff" stroke-width="1.6"/></svg>
      <svg class="i14 ml13" viewBox="0 0 14 14"><path d="M1 4H10V13H1ZM4 4V1H13V9H10" fill="none" stroke="#fff" stroke-width="1.3"/></svg>
      <svg class="i14 ml8" viewBox="0 0 14 14"><path d="M1 1L13 13M13 1L1 13" stroke="#fff" stroke-width="1.6"/></svg>
    </div>
    <div class="top-row d-flex align-items-center">
      <div class="m-tab m-file">文件(F)</div>
      <div class="m-tab m-active">主页</div>
      <div class="m-tab">装配</div>
      <div class="m-tab">曲线</div>
      <div class="m-tab">分析</div>
      <div class="m-tab">视图</div>
      <div class="m-tab">选择</div>
      <div class="m-tab">渲染</div>
      <div class="m-tab">工具</div>
      <div class="m-tab m-wide">应用模块</div>
      <div class="nx-search d-flex align-items-center justify-content-between">
        <span>在此输入以搜索</span>
        <svg class="i18" viewBox="0 0 18 18"><use href="#i-mag"/></svg>
      </div>
      <svg class="i16 ml10 top-ic" viewBox="0 0 16 16"><path d="M1 5V1H5M11 1H15V5M15 11V15H11M5 15H1V11" fill="none" stroke="#fff" stroke-width="1.1"/></svg>
      <svg class="i16 ml10 top-ic" viewBox="0 0 16 16"><path d="M1 12L8 4 15 12" fill="none" stroke="#fff" stroke-width="1.2"/></svg>
      <svg class="i16 ml10 top-ic" viewBox="0 0 16 16"><circle cx="8" cy="8" r="7" fill="none" stroke="#fff"/><path d="M5.6 6Q6 3.8 8 3.8 10.6 4 10.4 6 10 7.5 8.6 8 8 8.6 8 10" fill="none" stroke="#fff"/><circle cx="8" cy="12" r=".8" fill="#fff"/></svg>
      <svg class="i16 ml10 top-ic" viewBox="0 0 16 16"><path d="M8 0V11" stroke="#fff" stroke-width="2"/><circle cx="8" cy="14.5" r="1.2" fill="#fff"/></svg>
    </div>
  </header>

  <section class="nx-ribbon d-flex">
    <div class="rg w110">
      <div class="rg-body d-flex"><div class="stk2 ml12">
        <div><svg class="i26"><use href="#i-plane"/></svg><span class="ml3">基准平面</span><div class="tri-d ml10"></div></div>
        <div><svg class="i26"><use href="#i-sketch"/></svg><span class="ml3">草图</span></div>
      </div></div>
      <div class="rg-foot d-flex"><div class="rg-name">构造</div><div class="rg-car"><div class="tri-d"></div></div></div>
    </div>
    <div class="rg w90">
      <div class="rg-body d-flex">
        <div class="stk2 ml12"><div><svg class="i26"><use href="#i-conv"/></svg></div><div><svg class="i26"><use href="#i-cube"/></svg></div></div>
        <div class="lg lg-34 ml12"><svg class="i32"><use href="#i-broom"/></svg><div class="lg-lab">更多</div><div class="tri-d"></div></div>
      </div>
      <div class="rg-foot d-flex"><div class="rg-name">转换</div><div class="rg-car"><div class="tri-d"></div></div></div>
    </div>
    <div class="rg w144">
      <div class="rg-body d-flex">
        <div class="lg lg-34 ml12"><svg class="i34"><use href="#i-plate"/></svg><div class="lg-lab">突出块</div></div>
        <div class="stk3 ml9">
          <div><svg class="i18"><use href="#i-flange"/></svg><span class="ml2">弯边</span></div>
          <div><svg class="i18"><use href="#i-contour"/></svg><span class="ml2">轮廓弯边</span><div class="tri-d ml7"></div></div>
          <div><svg class="i18"><use href="#i-cutout"/></svg><span class="ml2">法向开孔</span></div>
        </div>
      </div>
      <div class="rg-foot d-flex"><div class="rg-name">基本</div><div class="rg-car"><div class="tri-d"></div></div></div>
    </div>
    <div class="rg w179">
      <div class="rg-body d-flex">
        <div class="lg lg-34 ml13"><svg class="i34"><use href="#i-bend"/></svg><div class="lg-lab">折弯</div></div>
        <div class="stk2 ml8">
          <div><svg class="i26"><use href="#i-unbend"/></svg><span class="ml2">伸直</span></div>
          <div><svg class="i26"><use href="#i-rebend"/></svg><span class="ml2">重新折弯</span></div>
        </div>
        <div class="lg lg-34 ms-auto mr7"><svg class="i34"><use href="#i-bend"/></svg><div class="lg-lab">更多</div><div class="tri-d"></div></div>
      </div>
      <div class="rg-foot d-flex"><div class="rg-name">折弯</div><div class="rg-car"><div class="tri-d"></div></div></div>
    </div>
    <div class="rg w90">
      <div class="rg-body d-flex">
        <div class="stk2 ml13"><div><svg class="i24"><use href="#i-cor1"/></svg></div><div><svg class="i24"><use href="#i-cor3"/></svg></div></div>
        <div class="lg lg-34 ml13"><svg class="i34"><use href="#i-cor2"/></svg><div class="lg-lab">更多</div><div class="tri-d"></div></div>
      </div>
      <div class="rg-foot d-flex"><div class="rg-name">拐角</div><div class="rg-car"><div class="tri-d"></div></div></div>
    </div>
    <div class="rg w91">
      <div class="rg-body d-flex">
        <div class="stk2 ml13"><div><svg class="i24"><use href="#i-dim1"/></svg></div><div><svg class="i24"><use href="#i-dim2"/></svg></div></div>
        <div class="lg lg-34 ml13"><svg class="i34"><use href="#i-guss"/></svg><div class="lg-lab">更多</div><div class="tri-d"></div></div>
      </div>
      <div class="rg-foot d-flex"><div class="rg-name">凸模</div><div class="rg-car"><div class="tri-d"></div></div></div>
    </div>
    <div class="rg w38">
      <div class="rg-body d-flex"><div class="stk3 ml10">
        <div><svg class="i18"><use href="#i-adj1"/></svg></div>
        <div><svg class="i18"><use href="#i-adj2"/></svg></div>
        <div><svg class="i18"><use href="#i-adj3"/></svg></div>
      </div></div>
      <div class="rg-foot d-flex"><div class="rg-name">调...</div><div class="rg-car"><div class="tri-d"></div></div></div>
    </div>
    <div class="rg w179">
      <div class="rg-body d-flex">
        <div class="lg lg-34 ml12"><svg class="i34"><use href="#i-ext"/></svg><div class="lg-lab">拉伸</div></div>
        <div class="stk2 ml8">
          <div><svg class="i26"><use href="#i-pat"/></svg><span class="ml2">阵列特征</span></div>
          <div><svg class="i26"><use href="#i-mir"/></svg><span class="ml2">镜像特征</span></div>
        </div>
        <div class="lg lg-34 ms-auto mr6"><svg class="i34"><use href="#i-cyl"/></svg><div class="lg-lab">更多</div><div class="tri-d"></div></div>
      </div>
      <div class="rg-foot d-flex"><div class="rg-name">建模</div><div class="rg-car"><div class="tri-d"></div></div></div>
    </div>
    <div class="rg w205">
      <div class="rg-body d-flex">
        <div class="lg lg-44 ml12"><svg class="i44"><use href="#i-tag"/></svg><div class="lg-lab lg-tight">钣金标签</div></div>
        <div class="stk3 ml6">
          <div><svg class="i18"><use href="#i-flat"/></svg><span class="ml2">展平图样</span></div>
          <div><svg class="i18"><use href="#i-exp"/></svg><span class="ml2">导出展平图样</span></div>
          <div><svg class="i18"><use href="#i-sol"/></svg><span class="ml2">展平实体</span></div>
        </div>
        <div class="lg lg-34 ms-auto mr7"><svg class="i32"><use href="#i-flatl"/></svg><div class="lg-lab">更多</div><div class="tri-d"></div></div>
      </div>
      <div class="rg-foot d-flex"><div class="rg-name">展平图样</div><div class="rg-car"><div class="tri-d"></div></div></div>
    </div>
    <div class="rg w55">
      <div class="rg-body d-flex"><div class="lg lg-34 ml12"><svg class="i32"><use href="#i-nest"/></svg><div class="lg-lab">嵌套</div></div></div>
      <div class="rg-foot d-flex"><div class="rg-name">嵌套</div><div class="rg-car"><div class="tri-d"></div></div></div>
    </div>
    <div class="ms-auto align-self-end"><div class="tri-d mb-2 me-1"></div></div>
  </section>

  <section class="nx-bar d-flex align-items-center">
    <svg class="i10 ml12" viewBox="0 0 10 10"><path d="M0 1H10M0 5H10M0 9H10" stroke="#333"/></svg>
    <span class="ml7">菜单(<u>M</u>)</span>
    <div class="tri-d ml5"></div>
    <div class="bar-sep ml7"></div>
    <div class="nx-sel w148 ml13"><span>无选择过滤器</span><div class="tri-d"></div></div>
    <svg class="i16 ml9" viewBox="0 0 16 16"><use href="#i-funnel"/></svg>
    <div class="nx-sel w156 ml9"><span>仅在工作部件内</span><div class="tri-d"></div></div>
    <div class="bar-box ml6"><svg class="i16"><use href="#i-cubes-d"/></svg></div>
    <svg class="i16 ml3" viewBox="0 0 16 16"><use href="#i-chain"/></svg>
    <svg class="i18 ml12"><use href="#i-fsel"/></svg>
    <div class="tri-d ml4"></div>
    <svg class="i18 ml6"><use href="#i-s1"/></svg>
    <svg class="i18 ml8"><use href="#i-s2"/></svg>
    <svg class="i18 ml7"><use href="#i-s3"/></svg>
    <div class="tri-d ml6"></div>
    <svg class="i18 ml10"><use href="#i-s4"/></svg>
    <svg class="i18 ml7"><use href="#i-s5"/></svg>
    <div class="bar-sep ml10"></div>
    <div class="tri-d ms-auto me-1"></div>
  </section>

  <main class="nx-main d-flex">
    <nav class="nv-strip d-flex flex-column">
      <div class="st-i st-top"><svg class="i16"><use href="#i-gear"/></svg></div>
      <div class="st-i"><svg class="i24"><use href="#i-parts"/></svg></div>
      <div class="st-i"><svg class="i26"><use href="#i-cons"/></svg></div>
      <div class="st-i st-on"><svg class="i26 m-auto"><use href="#i-smt"/></svg></div>
      <div class="st-i"><svg class="i24"><use href="#i-book"/></svg></div>
      <div class="st-i"><svg class="i26"><use href="#i-dimt"/></svg></div>
      <div class="st-i"><svg class="i26"><use href="#i-meas"/></svg></div>
      <div class="st-i"><svg class="i24"><use href="#i-eyeg"/></svg></div>
      <div class="st-i"><svg class="i24"><use href="#i-prof"/></svg></div>
      <div class="st-i"><svg class="i24"><use href="#i-layer"/></svg></div>
      <div class="st-i mt13x"><svg class="i24"><use href="#i-info"/></svg></div>
      <div class="st-i mt11x"><svg class="i24"><use href="#i-web"/></svg></div>
      <div class="st-i mt11x"><svg class="i24"><use href="#i-clock"/></svg></div>
      <div class="st-i mt2x"><svg class="i24"><use href="#i-color"/></svg></div>
      <div class="st-i"><svg class="i24"><use href="#i-tools"/></svg></div>
    </nav>

    <aside class="nv-panel">
      <div class="nv-head d-flex align-items-center justify-content-between">
        <span>部件导航器</span><div class="nv-win"></div>
      </div>
      <div class="nv-table">
        <div class="nv-hd">
          <div class="c-name"><span class="ml6">名称</span><div class="tri-t ms-4"></div></div>
          <div class="c-a">当</div><div class="c-b">最</div><div class="c-c">附注</div>
        </div>
        <div id="nv-rows">
          <div class="nv-row"><div class="c-name tree-a"><svg class="i16"><use href="#i-clk"/></svg><span class="nv-text ml3">历史记录建模模式</span></div><div class="c-a"></div><div class="c-b"></div><div class="c-c"></div></div>
          <div class="nv-row"><div class="c-name tree-a"><div class="pm-box">+</div><svg class="i16"><use href="#i-view"/></svg><span class="nv-text ml3">模型视图</span></div><div class="c-a"></div><div class="c-b"></div><div class="c-c"></div></div>
          <div class="nv-row"><div class="c-name tree-b"><div class="pm-box">+</div><svg class="i14"><use href="#i-chk"/></svg><svg class="i14 ml2"><use href="#i-cam"/></svg><span class="nv-text ml4">摄像机</span></div><div class="c-a"></div><div class="c-b"></div><div class="c-c"></div></div>
          <div class="nv-row"><div class="c-name tree-b"><div class="pm-box">−</div><svg class="i14"><use href="#i-ball"/></svg><svg class="i14 ml2"><use href="#i-hist"/></svg><span class="nv-text ml4">模型历史记录</span></div><div class="c-a"></div><div class="c-b"></div><div class="c-c"></div></div>
          <div class="nv-row"><div class="c-name tree-c"><svg class="i16"><use href="#i-eye"/></svg><svg class="i14"><use href="#i-csys"/></svg><span class="nv-text ml5">基准坐标系 (0)</span></div><div class="c-a"></div><div class="c-b"></div><div class="c-c"></div></div>
          <div class="nv-row"><div class="c-name tree-c"><svg class="i16"><use href="#i-eye"/></svg><svg class="i14"><use href="#i-sblk"/></svg><span class="nv-text nv-bold ml5">SB 突出块 (1)</span></div><div class="c-a"></div><div class="c-b"></div><div class="c-c"></div></div>
          <div class="nv-row"><div class="c-name tree-c"><svg class="i16"><use href="#i-noeye"/></svg><svg class="i14"><use href="#i-sdim"/></svg><span class="nv-text nv-gray ml5">SB 浅成形 (2)</span></div><div class="c-a"></div><div class="c-b"></div><div class="c-c"></div></div>
        </div>
        <svg class="nv-tree-svg" width="60" height="140" viewBox="0 0 60 140"><path d="M10.5 10V68M10.5 10H20M29.5 70V130M29.5 90H40M29.5 110H40M29.5 130H40" fill="none" stroke="#999" stroke-dasharray="1 1"/></svg>
        <div class="nv-hscroll"><div class="nv-thumb"></div></div>
      </div>
      <div class="nv-grip"></div>
      <div class="nv-fold d-flex align-items-center"><div class="tri-r"></div><span>搜索</span></div>
      <div class="nv-fold d-flex align-items-center"><div class="tri-r"></div><span>相关性</span></div>
      <div class="nv-fold d-flex align-items-center"><div class="tri-r"></div><span>细节</span></div>
      <div class="nv-fold d-flex align-items-center"><div class="tri-r"></div><span>预览</span></div>
    </aside>

    <div class="vp">
      <svg class="vp-canvas" width="916" height="777" viewBox="364 178 916 777">
        <polygon points="618,243 1184,366 1023,792 457,669" fill="#b0bdbf"/>
        <path d="M753,430L774,434 757,483 852,503 872,456 893,460 843,590 822,584 837,545 741,525 725,564 703,559Z" fill="none" stroke="#4a5356" stroke-width="4.6" stroke-linejoin="round" transform="translate(-.6 -.6)"/>
        <path d="M753,430L774,434 757,483 852,503 872,456 893,460 843,590 822,584 837,545 741,525 725,564 703,559Z" fill="none" stroke="#f6982e" stroke-width="3" stroke-linejoin="round"/>
        <g fill="none" stroke="#b09a9c" stroke-width="1">
          <path d="M821,520V470M821,487L831,460 M820,513L842,468M812,517H850L900,533"/>
          <path d="M821,490L856,497 870,497 860,528 828,522 M832,487L867,494 M821,508L856,515"/>
        </g>
        <polygon points="821,464 818,474 824,474" fill="#6e3d40"/>
        <polygon points="842,463 836,473 842,476" fill="#a14f55"/>
        <polygon points="901,534 884,528 884,535" fill="#a14f55"/>
        <text x="822" y="461" text-anchor="middle" fill="#a8686c" font-size="11">Z</text>
        <text x="844" y="458" text-anchor="middle" fill="#b08a8c" font-size="11">Y</text>
        <text x="907" y="539" text-anchor="middle" fill="#b0a0a0" font-size="11">X</text>
        <g fill="none" stroke="#a89a66" stroke-width="1">
          <path d="M728,495L726,563M728,495L735,563M716,524L800,513"/>
        </g>
        <polygon points="728,494 792,507 794,505 810,511.5 792,514 793,511" fill="url(#g-arrow)"/>
        <polygon points="792,514 802,514 797,527" fill="#005a96"/>
        <rect x="792" y="513" width="10" height="4" fill="#12b6f0"/>
        <circle cx="734" cy="564" r="4.2" fill="#9d8a55"/>

        <g fill="none" stroke="#c6c6c6" stroke-width="1">
          <polygon points="452,819 490,827 479,855 441,847"/>
          <path d="M441,847V874L478,883 479,855M478,883L490,850V827"/>
        </g>
        <path d="M466,838V812" stroke="#0b3ea8" stroke-width="5" stroke-linecap="round"/>
        <polygon points="466,802 460,815 472,815" fill="#0b3ea8"/>
        <path d="M475,823L480,812" stroke="#3fa83f" stroke-width="5"/>
        <polygon points="484,802 474,813 483,817" fill="#3fa83f"/>
        <path d="M485,855L516,861" stroke="#d83030" stroke-width="4"/>
        <polygon points="532,865 513,857 513,866" fill="#b82020"/>
        <text x="467" y="803" text-anchor="middle" fill="#2468e0" font-size="12">Z</text>
        <text x="486" y="800" text-anchor="middle" fill="#35b050" font-size="12">Y</text>
        <text x="541" y="871" text-anchor="middle" fill="#d83030" font-size="12">X</text>
      </svg>

      <div class="vp-tabs d-flex">
        <div class="vp-tab vp-tab1"><svg class="i18"><use href="#i-doc"/></svg><span class="ml2">发现中心</span></div>
        <div class="vp-tab vp-tab2 justify-content-start"><svg class="i14"><use href="#i-tabm"/></svg><span class="ml5">sheet_metal_model1.prt</span>
          <svg class="i10 ml6" viewBox="0 0 10 10"><path d="M6 1H1V9H9V5M5 5L9 1M6 1H9V4" fill="none" stroke="#fff"/></svg>
          <svg class="i10 ml5" viewBox="0 0 10 10"><path d="M1 1L9 9M9 1L1 9" stroke="#fff" stroke-width="1.4"/></svg>
        </div>
      </div>

      <div class="nx-sel w156 vp-combo"><span>特征曲线</span><div class="tri-d"></div></div>
      <div class="vp-more"><span class="ml2">···</span><svg class="i10 ms-auto" viewBox="0 0 10 10"><path d="M1 2H9" stroke="#555"/><path d="M2 5H8L5 9Z" fill="#222"/></svg></div>

      <div class="vp-pop">
        <div class="pop-grip"></div><span class="pop-lab">深度</span>
        <div class="pop-sel"><span>5</span><div class="tri-d"></div></div>
      </div>

      <div class="vp-side d-flex flex-column">
        <svg class="i26"><use href="#i-plate"/></svg>
        <svg class="i26"><use href="#i-dim1"/></svg>
        <svg class="i26" viewBox="0 0 32 32"><use href="#i-cyl"/><g transform="translate(3 2)"><use href="#wr"/></g></svg>
        <svg class="i26" viewBox="0 0 32 32"><path d="M2 20Q8 5 26 3" fill="none" stroke="#18a7cf"/><path d="M6 6V28H22" fill="none" stroke="#18a7cf"/><circle cx="15" cy="15" r="7" fill="none" stroke="#18a7cf"/><g transform="translate(3 2)"><use href="#wr"/></g></svg>
        <svg class="i26"><use href="#i-rect"/></svg>
        <svg class="i26" viewBox="0 0 32 32"><polygon points="2,16 12,8 22,14 14,22" fill="url(#g-or)"/><polygon points="10,7 20,2 28,8 22,14" fill="#ccc" stroke="#555"/><g transform="translate(3 2)"><use href="#wr"/></g></svg>
        <svg class="i26"><use href="#i-curv"/></svg>
        <svg class="i26"><use href="#i-prof2"/></svg>
        <svg class="i26"><use href="#i-arc"/></svg>
        <svg class="i26"><use href="#i-diag"/></svg>
        <div class="vp-rule"></div>
      </div>
    </div>

    <div class="dg">
      <div class="dg-head d-flex align-items-center">
        <svg class="i14" viewBox="0 0 16 16"><circle cx="8" cy="8" r="4.4" fill="none" stroke="#fff" stroke-width="2.4"/><circle cx="8" cy="8" r="6.6" fill="none" stroke="#fff" stroke-width="1.8" stroke-dasharray="2.6 2.6"/></svg>
        <span class="ml8">凹坑</span>
        <svg class="i14 ms-auto" viewBox="0 0 14 14"><path d="M4 3A5.4 5.4 0 1 1 2 8" fill="none" stroke="#fff" stroke-width="1.8"/><path d="M1 1V6H6Z" fill="#fff" transform="rotate(15 4 4)"/></svg>
        <span class="ml7 fw-bold dg-q">?</span>
        <svg class="i14 ml10" viewBox="0 0 14 14"><path d="M2 2L12 12M12 2L2 12" stroke="#fff" stroke-width="1.8"/></svg>
      </div>
      <div class="dg-body">
        <div class="dg-sec dg-s1">
          <div class="dg-title"><div class="tri-dd"></div>截面</div>
          <div class="d-flex">
            <div class="dg-pick"><svg class="i16"><use href="#i-chk"/></svg><span class="ml3">选择曲线 (12)</span></div>
            <div class="dg-icobtn ml2 mt-2"><svg class="i20"><use href="#i-sketch"/></svg></div>
            <div class="dg-yel ml2 mt-1"><svg class="i26"><use href="#i-pick"/></svg></div>
          </div>
        </div>
        <div class="dg-sec dg-s2">
          <div class="dg-title"><div class="tri-dd"></div>凹坑属性</div>
          <div class="dg-row dg-r1">
            <div class="dg-lab">深度</div>
            <div class="dg-icobtn"><svg class="i20"><use href="#i-xsq"/></svg></div>
            <div class="dg-field ml1"><span class="dg-mark">5</span><span class="dg-unit">mm</span><div class="tri-d"></div></div>
          </div>
          <div class="dg-row"><div class="dg-lab">侧角</div><div class="dg-field dg-indent"><span>5</span><span class="dg-unit">°</span><div class="tri-d"></div></div></div>
          <div class="dg-row"><div class="dg-lab">侧壁</div><div class="dg-field dg-indent"><svg class="i16"><use href="#i-side"/></svg><span class="ml3">材料外侧</span><div class="tri-d"></div></div></div>
        </div>
        <div class="dg-sec dg-s3">
          <div class="dg-title"><div class="tri-dd"></div>验证参数</div>
          <div class="dg-row dg-r1"><div class="dg-lab">最小工具间隙</div><div class="dg-field dg-indent"><span class="dg-grey">5.0000</span><span class="dg-unit">mm</span><div class="dg-eq"></div></div></div>
        </div>
        <div class="dg-sec dg-s4"><div class="dg-title"><div class="tri-r"></div>设置</div></div>
      </div>
      <div class="dg-foot">
        <div class="d-flex align-items-center">
          <div class="dg-check"><svg class="i10" viewBox="0 0 10 10"><path d="M2 5L4.2 7.4 8 2.6" fill="none" stroke="#fff" stroke-width="1.1"/></svg></div>
          <span>预览</span>
          <span class="ms-auto">显示结果</span>
          <div class="dg-search"><svg class="i18"><use href="#i-mag"/></svg></div>
        </div>
        <div class="tri-t dg-up"></div>
        <div class="dg-line"></div>
        <button type="button" class="btn dg-ok">&lt; 确定 &gt;</button>
        <button type="button" class="btn dg-no">取消</button>
      </div>
    </div>
  </main>

  <div class="nx-status">为截面选择曲线</div>

  <footer class="nx-task d-flex">
    <div class="tb-i tb-first"><svg class="i24"><use href="#i-win"/></svg></div>
    <div class="tb-i"><svg class="i24"><use href="#i-edge"/></svg><div class="tb-dot"></div></div>
    <div class="tb-i"><svg class="i24"><use href="#i-fold"/></svg><div class="tb-dot"></div></div>
    <div class="tb-i"><svg class="i24"><use href="#i-note"/></svg><div class="tb-dot"></div></div>
    <div class="tb-i tb-on"><svg class="i24" viewBox="0 0 24 24"><rect x="1" y="1" width="22" height="22" rx="2" fill="#8e1c1c"/><text x="12" y="16" text-anchor="middle" fill="#fff" font-family="Liberation Sans" font-weight="700" font-size="11">NX</text></svg><div class="tb-dash"></div></div>
    <div class="tb-i"><svg class="i24"><use href="#i-wx"/></svg><div class="tb-dot"></div></div>
    <div class="tb-i"><svg class="i24"><use href="#i-pal"/></svg><div class="tb-dot"></div></div>
    <div class="tray d-flex align-items-center">
      <svg class="i14" viewBox="0 0 14 14"><path d="M1 10L7 4 13 10" fill="none" stroke="#222" stroke-width="1.2"/></svg>
      <svg class="i18 ml10"><use href="#i-wx"/></svg>
      <svg class="i16 ml7"><use href="#i-shld"/></svg>
      <span class="tb-zh">中</span>
      <svg class="i18 ml22"><use href="#i-sgo"/></svg>
      <svg class="i16 ml20"><use href="#i-disp"/></svg>
      <svg class="i16 ml9"><use href="#i-spk"/></svg>
    </div>
    <div class="tb-time">15:54<br>2023/3/5</div>
    <div class="tb-mark">UG爱好者论坛@21314517</div>
  </footer>

  <div class="ime"><span class="ime-ch">五</span>
    <svg class="i14 ml8" viewBox="0 0 14 14"><path d="M9 1A6 6 0 1 1 1 9 7 7 0 0 0 9 1Z" fill="#4a5068"/></svg>
    <span class="ml8 ime-p">°,</span>
    <svg class="i16 ml8" viewBox="0 0 16 16"><rect x="0" y="3" width="16" height="10" rx="1" fill="#4a5068"/><path d="M2 6H14M2 8.5H14" stroke="#fff" stroke-dasharray="1.5 1"/><path d="M4 11H12" stroke="#fff"/></svg>
    <svg class="i14 ml6" viewBox="0 0 14 14"><circle cx="7" cy="4" r="3.2" fill="#4a5068"/><path d="M1 13Q1 8 7 8T13 13Z" fill="#4a5068"/></svg>
    <svg class="i14 ml6" viewBox="0 0 14 14"><g fill="#4a5068"><circle cx="3.5" cy="3.5" r="3"/><circle cx="10.5" cy="3.5" r="3"/><circle cx="3.5" cy="10.5" r="3"/><circle cx="10.5" cy="10.5" r="3"/></g></svg>
  </div>
  <svg class="ime-logo" width="30" height="30"><use href="#i-sgo"/></svg>
  <div class="meter"><div class="meter-fill"></div></div>
  <div class="vp-back"></div>
</div>

<script>
  // blank rows of the part navigator
  const rows = document.getElementById('nv-rows');
  for (let i = 0; i < 23; i++) {
    rows.innerHTML += '<div class="nv-row"><div class="c-name"></div><div class="c-a"></div><div class="c-b"></div><div class="c-c"></div></div>';
  }
</script>
</body>
</html>
